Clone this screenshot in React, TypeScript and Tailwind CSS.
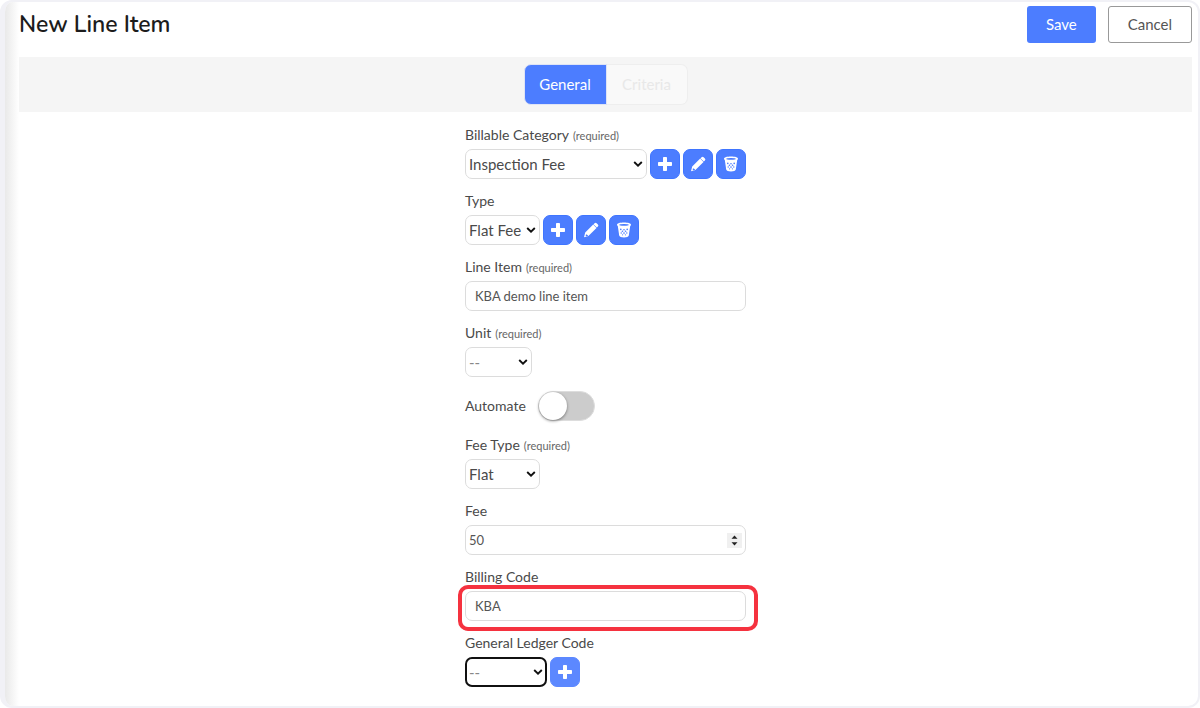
import { useState } from "react";
import type { ReactNode } from "react";
import clsx from "clsx";

const inputClass =
  "h-[30px] w-full rounded-[7px] border border-[#dcdcdc] bg-white text-[13px] text-[#555]";

function PlusIcon() {
  return (
    <svg viewBox="0 0 14 14" className="size-[14px]" fill="currentColor" aria-hidden="true">
      <path d="M5.800 0h2.400a.8.8 0 0 1 .8.8V5h4.200a.8.8 0 0 1 .8.8v2.400a.8.8 0 0 1-.8.8H9v4.200a.8.8 0 0 1-.8.8H5.800a.8.8 0 0 1-.8-.8V9H.8a.8.8 0 0 1-.8-.8V5.800A.8.8 0 0 1 .8 5H5V.8a.8.8 0 0 1 .8-.8z" />
    </svg>
  );
}

function PencilIcon() {
  return (
    <svg viewBox="0 0 16 16" className="size-4" fill="currentColor" aria-hidden="true">
      <path d="M11.600 1.200a1.400 1.400 0 0 1 2 0l1.300 1.300a1.400 1.400 0 0 1 0 2l-1.100 1.100-3.300-3.300z" />
      <path
        fillRule="evenodd"
        d="M10.200 2.600l3.300 3.300-8.100 8.100-4.400 1.200 1.200-4.600zM3.200 11.900l-.6 1.700.7.700 1.700-.5-.2-.8-1.200-.2z"
      />
    </svg>
  );
}

function TrashIcon() {
  return (
    <svg viewBox="0 0 16 16" className="size-4" aria-hidden="true">
      <path
        d="M1 2.800C1 1.400 4 .6 8 .6s7 .8 7 2.200c0 .6-.3 1-.8 1.300l-1.400 9.500c-.2 1.200-2.200 1.900-4.800 1.900s-4.600-.7-4.800-1.900L1.800 4.100C1.300 3.800 1 3.400 1 2.800z"
        fill="currentColor"
      />
      <ellipse cx="8" cy="2.900" rx="4.800" ry=".8" fill="#4c7dff" />
      <g fill="#4c7dff">
        <circle cx="4.800" cy="7.400" r=".8" />
        <circle cx="8" cy="7.700" r=".8" />
        <circle cx="11.200" cy="7.400" r=".8" />
        <circle cx="6.400" cy="9.300" r=".8" />
        <circle cx="9.600" cy="9.300" r=".8" />
        <circle cx="5.200" cy="11" r=".7" />
        <circle cx="8" cy="11.100" r=".8" />
        <circle cx="10.800" cy="11" r=".7" />
        <circle cx="6.600" cy="12.800" r=".6" />
        <circle cx="9.400" cy="12.800" r=".6" />
      </g>
    </svg>
  );
}

function IconButton({
  label,
  light,
  children,
}: {
  label: string;
  light?: boolean;
  children: ReactNode;
}) {
  return (
    <button
      type="button"
      aria-label={label}
      className={clsx(
        "flex h-[30px] w-[30px] shrink-0 items-center justify-center rounded-[7px] border text-white",
        light ? "border-[#5c88ff] bg-[#5c88ff]" : "border-[#3f75ff] bg-[#4c7dff]",
      )}
    >
      {children}
    </button>
  );
}

function Select({
  id,
  option,
  width,
  empty,
  focused,
}: {
  id: string;
  option: string;
  width: string;
  empty?: boolean;
  focused?: boolean;
}) {
  return (
    <div className={clsx("relative", width)}>
      <select
        id={id}
        className={clsx(
          "block h-[30px] w-full appearance-none rounded-[7px] bg-white pr-4 text-[15px]",
          focused ? "border-2 border-[#111] pl-[2px]" : "border border-[#dcdcdc] pl-[3px]",
          empty ? "text-[#888]" : "text-[#4a4a4a]",
        )}
      >
        <option>{option}</option>
      </select>
      <svg
        viewBox="0 0 10 6"
        className="pointer-events-none absolute top-3 right-1 h-[6px] w-[10px]"
        fill="none"
        stroke="#111"
        strokeWidth="1.900"
        aria-hidden="true"
      >
        <path d="M1.200 1l3.800 3.600L8.800 1" />
      </svg>
    </div>
  );
}

function Field({
  id,
  label,
  required,
  children,
}: {
  id: string;
  label: string;
  required?: boolean;
  children: ReactNode;
}) {
  return (
    <div className="mb-3">
      <label htmlFor={id} className="mb-1 block h-5 text-sm leading-5 text-[#4a4a4a]">
        {label}
        {required && (
          <span className="ml-1 text-[11px] leading-none text-[#666]">(required)</span>
        )}
      </label>
      {children}
    </div>
  );
}

export default function App() {
  const [automate, setAutomate] = useState(false);
  const [lineItem, setLineItem] = useState("KBA demo line item");
  const [fee, setFee] = useState("50");
  const [billingCode, setBillingCode] = useState("KBA");

  return (
    <div className="min-h-screen bg-white font-['Lato',sans-serif]">
      <div className="flex min-h-screen overflow-hidden rounded-xl border-2 border-l-[5px] border-[#f1f1f6]">
        <div className="w-[14px] shrink-0 bg-linear-to-r from-[#e9e9e9] to-white" />
        <div className="min-w-0 flex-1 pr-[6px]">
          <header className="flex h-[55px] items-start justify-between pt-1">
            <h1 className="font-['Nunito','Lato',sans-serif] text-[23px] leading-[38px] font-semibold text-[#1c1c1c]">
              New Line Item
            </h1>
            <div className="flex gap-3">
              <button
                type="button"
                className="h-[37px] rounded-[3px] bg-[#4c7dff] px-[19px] text-[15px] text-white"
              >
                Save
              </button>
              <button
                type="button"
                className="h-[37px] rounded-[3px] border border-[#999] bg-white px-[19px] text-[15px] text-[#555]"
              >
                Cancel
              </button>
            </div>
          </header>

          <nav className="flex h-[55px] items-center justify-center bg-[#f5f5f5]">
            <button
              type="button"
              className="h-[41px] w-[83px] rounded-l-[7px] border border-[#dfe4f5] bg-[#4c7dff] text-[15px] text-white"
            >
              General
            </button>
            <button
              type="button"
              disabled
              className="h-[41px] w-[81px] rounded-r-[7px] border border-l-0 border-[#eee] bg-[#f9f9f9] text-[15px] text-[#e8e8e8]"
            >
              Criteria
            </button>
          </nav>

          <form className="mx-auto w-[281px] pt-[13px]">
            <Field id="category" label="Billable Category" required>
              <div className="flex gap-[3px]">
                <Select id="category" option="Inspection Fee" width="flex-1" />
                <IconButton label="Add category">
                  <PlusIcon />
                </IconButton>
                <IconButton label="Edit category">
                  <PencilIcon />
                </IconButton>
                <IconButton label="Delete category">
                  <TrashIcon />
                </IconButton>
              </div>
            </Field>

            <Field id="type" label="Type">
              <div className="flex gap-[3px]">
                <Select id="type" option="Flat Fee" width="w-[75px]" />
                <IconButton label="Add type">
                  <PlusIcon />
                </IconButton>
                <IconButton label="Edit type">
                  <PencilIcon />
                </IconButton>
                <IconButton label="Delete type">
                  <TrashIcon />
                </IconButton>
              </div>
            </Field>

            <Field id="line-item" label="Line Item" required>
              <input
                id="line-item"
                type="text"
                value={lineItem}
                onChange={(e) => setLineItem(e.target.value)}
                className={clsx(inputClass, "px-[9px]")}
              />
            </Field>

            <Field id="unit" label="Unit" required>
              <Select id="unit" option="--" width="w-[67px]" empty />
            </Field>

            <div className="mb-3 flex h-[34px] items-center gap-3">
              <label htmlFor="automate" className="text-sm text-[#4a4a4a]">
                Automate
              </label>
              <input
                id="automate"
                type="checkbox"
                role="switch"
                checked={automate}
                onChange={(e) => setAutomate(e.target.checked)}
                className="h-[30px] w-[57px] appearance-none rounded-full border border-[#ddd] bg-[#ccc] before:block before:size-7 before:rounded-full before:bg-white before:shadow-[0_1px_3px_rgba(0,0,0,0.45)] checked:bg-[#4c7dff] checked:before:translate-x-[27px]"
              />
            </div>

            <Field id="fee-type" label="Fee Type" required>
              <Select id="fee-type" option="Flat" width="w-[75px]" />
            </Field>

            <Field id="fee" label="Fee">
              <div className="relative">
                <input
                  id="fee"
                  type="number"
                  value={fee}
                  onChange={(e) => setFee(e.target.value)}
                  className={clsx(
                    inputClass,
                    "pr-5 pl-[3px] [appearance:textfield] [&::-webkit-inner-spin-button]:appearance-none",
                  )}
                />
                <svg
                  viewBox="0 0 15 15"
                  className="pointer-events-none absolute top-2 right-1 size-[15px] bg-[#f0f0f0]"
                  fill="#222"
                  aria-hidden="true"
                >
                  <path d="M7.500 2.500l3 3.300h-6zM7.500 12.500l3-3.300h-6z" />
                </svg>
              </div>
            </Field>

            <Field id="billing-code" label="Billing Code">
              <div className="relative">
                <input
                  id="billing-code"
                  type="text"
                  value={billingCode}
                  onChange={(e) => setBillingCode(e.target.value)}
                  className={clsx(inputClass, "px-[9px]")}
                />
                <div className="pointer-events-none absolute -top-[6px] -right-3 -bottom-[10px] -left-[7px] rounded-[10px] border-4 border-[#f5323f]" />
              </div>
            </Field>

            <Field id="ledger-code" label="General Ledger Code">
              <div className="flex gap-[3px]">
                <Select id="ledger-code" option="--" width="w-[82px]" empty focused />
                <IconButton label="Add ledger code" light>
                  <PlusIcon />
                </IconButton>
              </div>
            </Field>
          </form>
        </div>
      </div>
    </div>
  );
}
